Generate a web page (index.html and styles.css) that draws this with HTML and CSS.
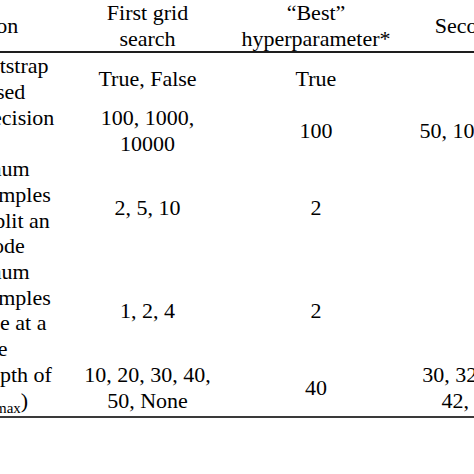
FILE: index.html
```html
<!DOCTYPE html>
<html>
<head>
<meta charset="utf-8">
<link rel="stylesheet" href="styles.css">
</head>
<body>
<table class="grid">
  <colgroup>
    <col class="c-param">
    <col class="c-first">
    <col class="c-best">
    <col class="c-second">
  </colgroup>
  <thead>
    <tr>
      <th>Description</th>
      <th>First grid<br>search</th>
      <th>“Best”<br>hyperparameter*</th>
      <th>Second grid search</th>
    </tr>
  </thead>
  <tbody>
    <tr>
      <td>Whether bootstrap<br>samples used</td>
      <td>True, False</td>
      <td>True</td>
      <td>True</td>
    </tr>
    <tr>
      <td>Number of decision<br>trees</td>
      <td>100, 1000,<br>10000</td>
      <td>100</td>
      <td>50, 100, 150, 200, 250</td>
    </tr>
    <tr>
      <td>The minimum<br>number of samples<br>required to split an<br>internal node</td>
      <td>2, 5, 10</td>
      <td>2</td>
      <td>2, 3, 4</td>
    </tr>
    <tr>
      <td>The minimum<br>number of samples<br>required to be at a<br>leaf node</td>
      <td>1, 2, 4</td>
      <td>2</td>
      <td>1, 2, 3</td>
    </tr>
    <tr class="last">
      <td>Maximum depth of<br>the tree (d<sub>max</sub>)</td>
      <td>10, 20, 30, 40,<br>50, None</td>
      <td>40</td>
      <td>30, 32, 34, 36, 38, 40,<br>42, 44, 46, 48, 50</td>
    </tr>
  </tbody>
</table>
</body>
</html>
```

FILE: styles.css
```css
html, body {
  margin: 0;
  padding: 0;
  overflow: hidden;
  background: #ffffff;
}

.grid {
  border-collapse: collapse;
  table-layout: fixed;
  width: 766px;
  margin-left: -138px;
  font-family: "Liberation Serif", "Times New Roman", serif;
  font-size: 22px;
  line-height: 25.7px;
  color: #000000;
}

.c-param { width: 210px; }
.c-first { width: 151px; }
.c-best { width: 186px; }
.c-second { width: 219px; }

.grid th,
.grid td {
  padding: 0;
  text-align: center;
  vertical-align: middle;
  font-weight: normal;
}

.grid thead th {
  border-bottom: 2px solid #1e1e1e;
}

.grid tr.last td {
  padding-bottom: 3px;
  border-bottom: 2px solid #3a3a3a;
}

.grid sub {
  font-size: 15px;
  line-height: 0;
}
```
